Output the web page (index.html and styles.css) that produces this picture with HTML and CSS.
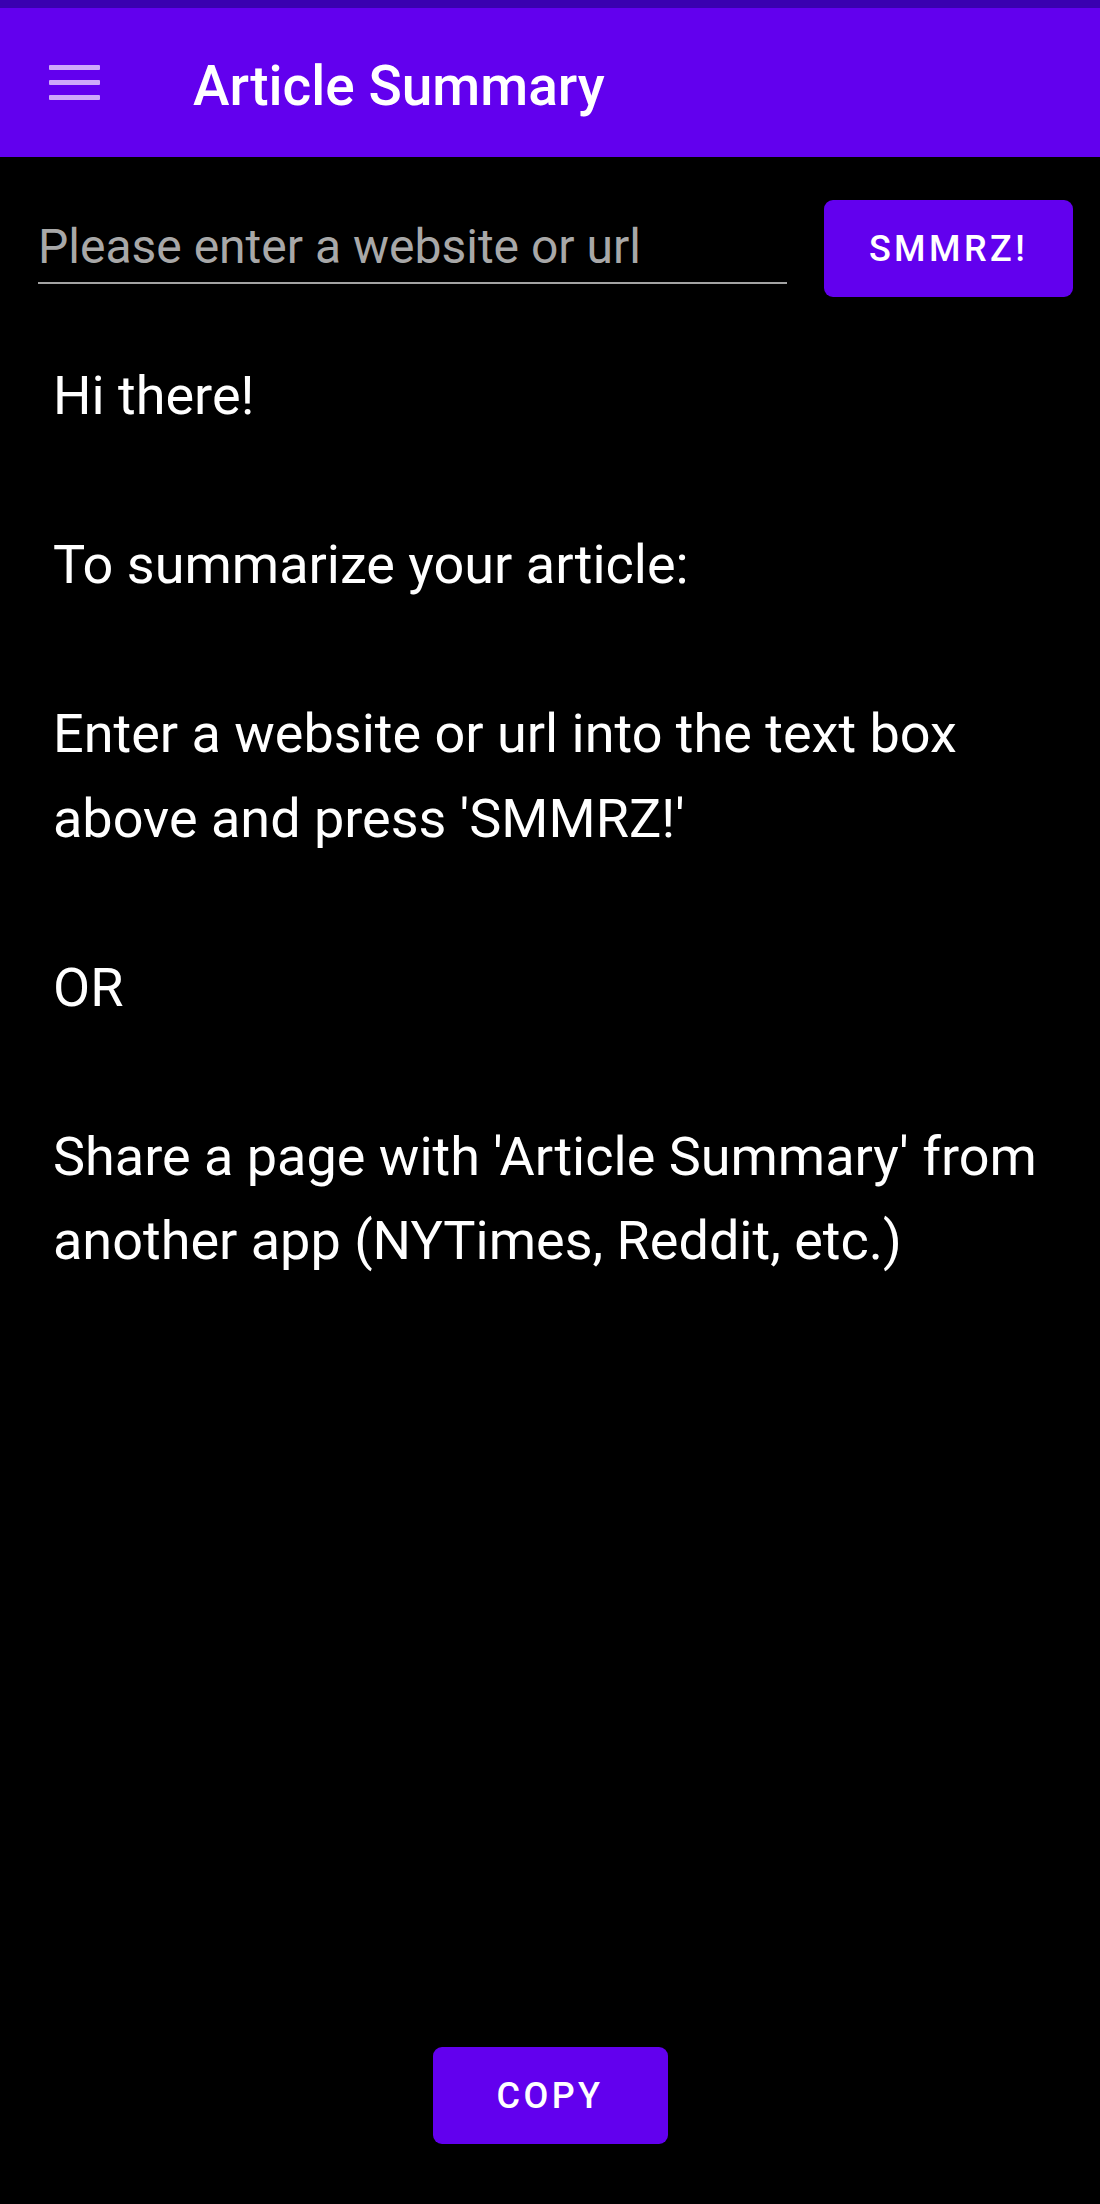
FILE: index.html
```html
<!DOCTYPE html>
<html lang="en">
<head>
<meta charset="utf-8">
<title>Article Summary</title>
<link rel="stylesheet" href="styles.css">
</head>
<body>
<div class="screen">
  <div class="status-bar"></div>
  <header class="app-bar">
    <svg class="menu-icon" width="51" height="35" viewBox="0 0 51 35" aria-hidden="true">
      <rect x="0" y="0" width="51" height="5" rx="1"/>
      <rect x="0" y="15" width="51" height="5" rx="1"/>
      <rect x="0" y="30" width="51" height="5" rx="1"/>
    </svg>
    <h1 class="title">Article Summary</h1>
  </header>
  <div class="url-row">
    <input class="url-input" type="text" placeholder="Please enter a website or url">
    <button class="btn btn-smmrz">SMMRZ!</button>
  </div>
  <main class="content">
    <p>Hi there!</p>
    <p>To summarize your article:</p>
    <p>Enter a website or url into the text box above and press 'SMMRZ!'</p>
    <p>OR</p>
    <p>Share a page with 'Article Summary' from another app (NYTimes, Reddit, etc.)</p>
  </main>
  <div class="footer">
    <button class="btn btn-copy">COPY</button>
  </div>
</div>
</body>
</html>
```

FILE: styles.css
```css
* { box-sizing: border-box; }

html, body {
  margin: 0;
  padding: 0;
  background: #000;
}

body {
  font-family: Roboto, "Noto Sans", "Liberation Sans", sans-serif;
  color: #fff;
}

.screen {
  display: flex;
  flex-direction: column;
  min-height: 2204px;
}

.status-bar {
  height: 8px;
  background: #3a00b0;
}

.app-bar {
  height: 149px;
  background: #6200ee;
  display: flex;
  align-items: center;
  padding-left: 49px;
}

.menu-icon {
  fill: #cfa9fa;
  flex: none;
}

.title {
  margin: 8px 0 0 93px;
  font-size: 55px;
  font-weight: 500;
  color: #fff;
  line-height: 1.17;
}

.url-row {
  display: flex;
  align-items: flex-start;
  padding: 43px 27px 0 38px;
  gap: 37px;
}

.url-input {
  width: 749px;
  height: 84px;
  padding: 16px 0 6px 0;
  border: none;
  border-bottom: 2px solid #a3a3a3;
  background: transparent;
  font-family: Roboto, "Noto Sans", "Liberation Sans", sans-serif;
  font-size: 48px;
  line-height: 60px;
  color: #fff;
  outline: none;
}

.url-input::placeholder {
  color: #a8a8a8;
  opacity: 1;
}

.btn {
  border: none;
  border-radius: 9px;
  background: #6200ee;
  color: #fff;
  font-family: Roboto, "Noto Sans", "Liberation Sans", sans-serif;
  font-size: 36px;
  font-weight: 500;
  letter-spacing: 0.095em;
  padding: 0;
  display: flex;
  align-items: center;
  justify-content: center;
}

.btn-smmrz {
  width: 249px;
  height: 97px;
  flex: none;
}

.content {
  padding: 57px 30px 0 53px;
  font-size: 54px;
  line-height: 84.5px;
}

.content p {
  margin: 0 0 84.5px 0;
}

.footer {
  margin-top: auto;
  display: flex;
  justify-content: center;
  padding-bottom: 60px;
}

.btn-copy {
  width: 235px;
  height: 97px;
}
```
